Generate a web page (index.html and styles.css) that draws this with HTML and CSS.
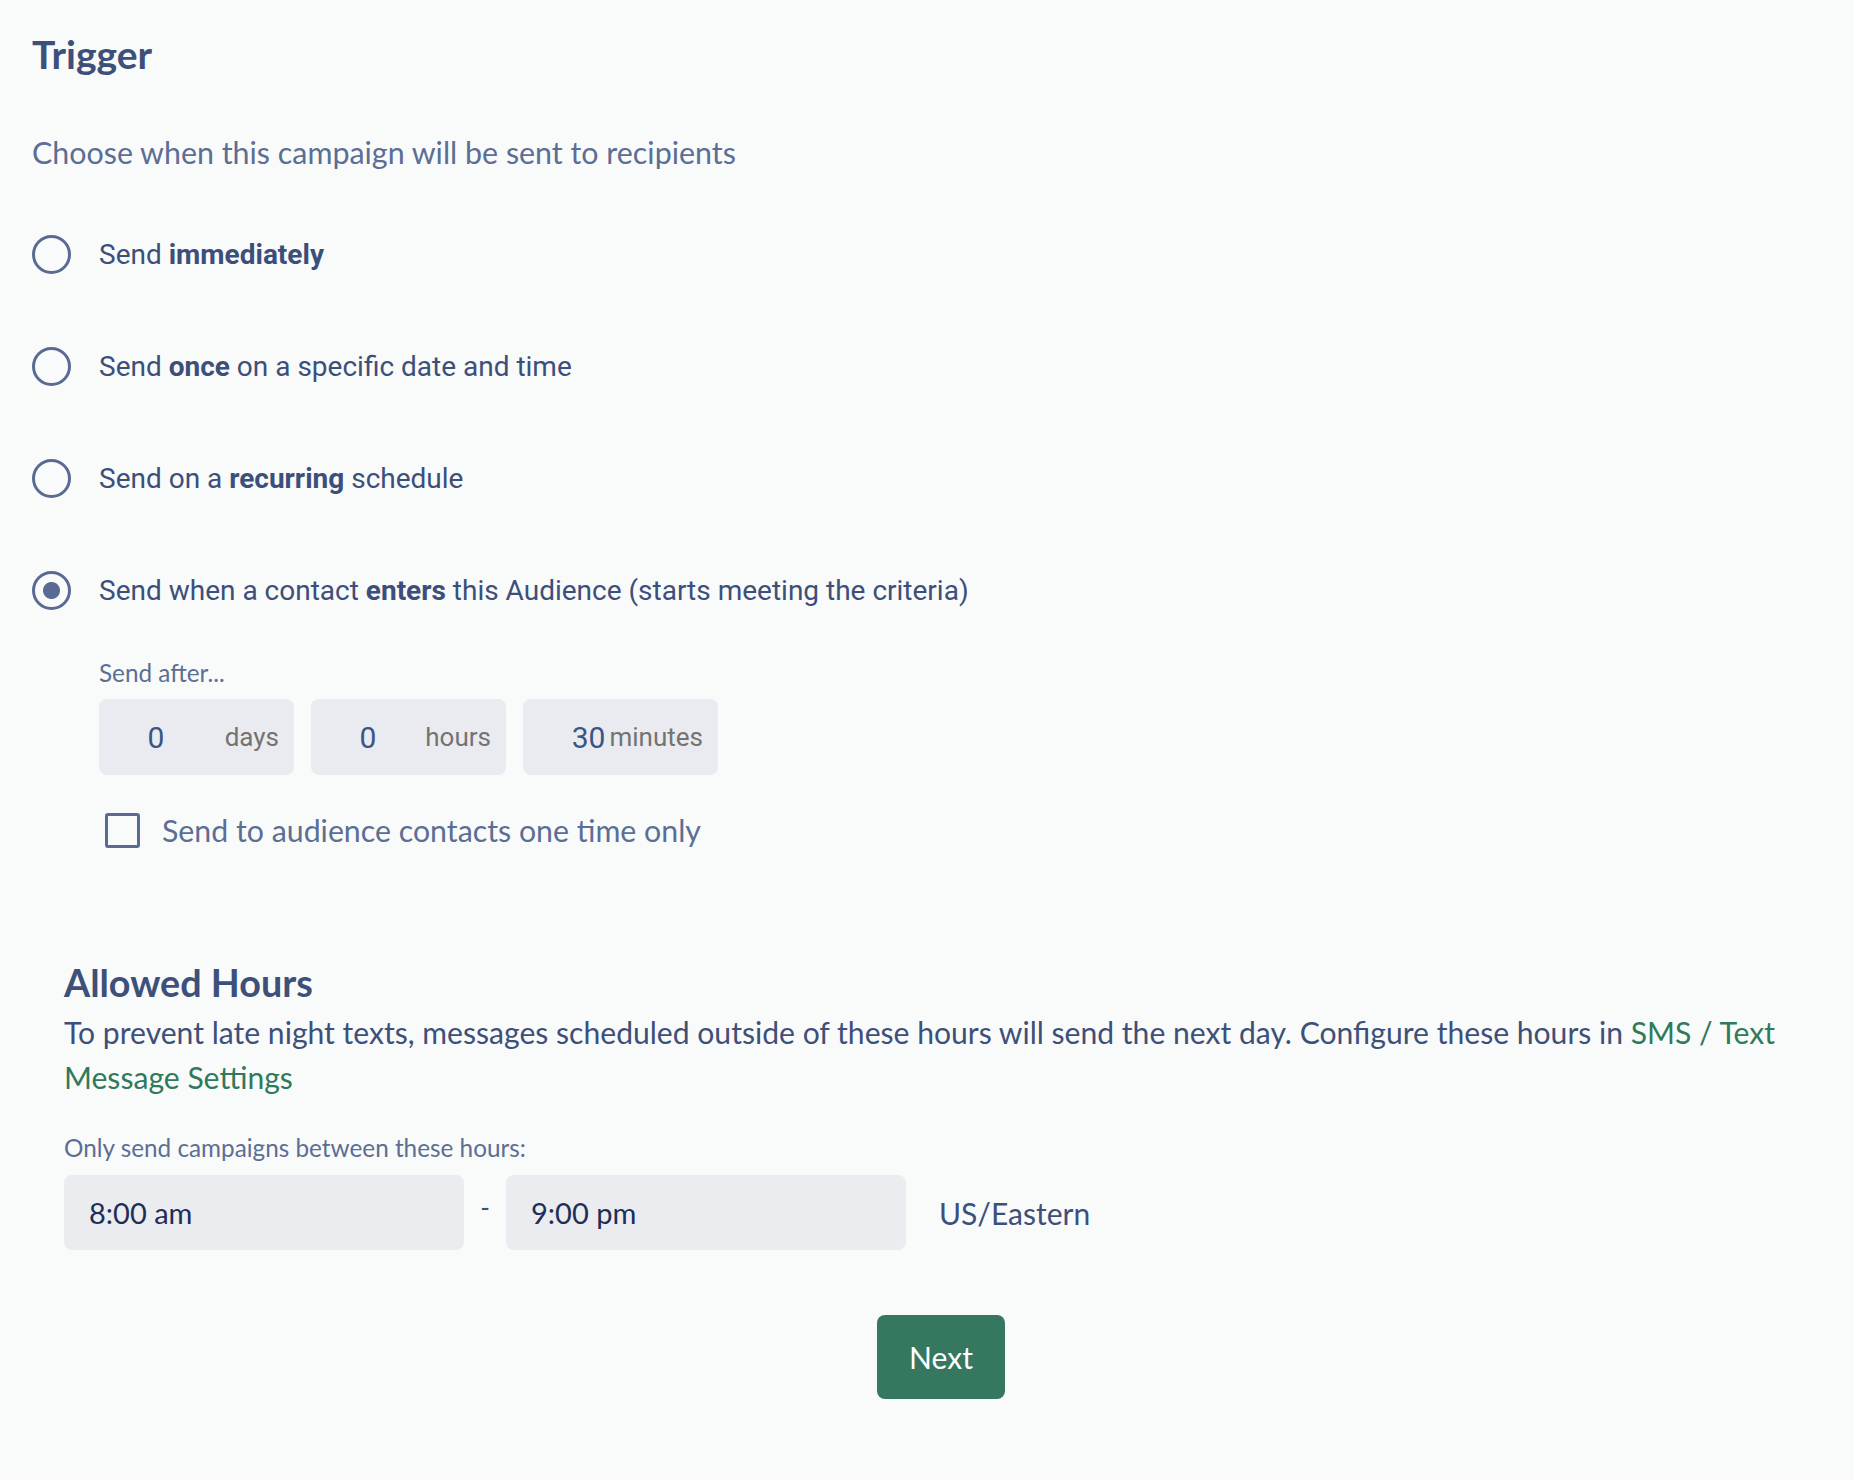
FILE: index.html
```html
<html>
    <head>
        <link rel="stylesheet" href="styles.css">
    </head>
    <body>
        <main class="trigger">
            <h2 class="title">Trigger</h2>
            <p class="lead">Choose when this campaign will be sent to recipients</p>

            <div class="options">
                <label class="option">
                    <input type="radio" name="when">
                    <span>Send <b>immediately</b></span>
                </label>
                <label class="option">
                    <input type="radio" name="when">
                    <span>Send <b>once</b> on a specific date and time</span>
                </label>
                <label class="option">
                    <input type="radio" name="when">
                    <span>Send on a <b>recurring</b> schedule</span>
                </label>
                <label class="option">
                    <input type="radio" name="when" checked>
                    <span>Send when a contact <b>enters</b> this Audience (starts meeting the criteria)</span>
                </label>
            </div>

            <div class="delay">
                <div class="small-label">Send after...</div>
                <div class="delay-inputs">
                    <div class="delay-box">
                        <input class="delay-num" value="0">
                        <span class="delay-unit">days</span>
                    </div>
                    <div class="delay-box">
                        <input class="delay-num" value="0">
                        <span class="delay-unit">hours</span>
                    </div>
                    <div class="delay-box wide-num">
                        <input class="delay-num" value="30">
                        <span class="delay-unit">minutes</span>
                    </div>
                </div>
                <label class="once">
                    <input type="checkbox">
                    <span>Send to audience contacts one time only</span>
                </label>
            </div>

            <section class="allowed">
                <h3 class="allowed-title">Allowed Hours</h3>
                <p class="allowed-text">
                    To prevent late night texts, messages scheduled outside of these hours will send the next day. Configure these hours in <a href="#">SMS / Text Message Settings</a>
                </p>
                <div class="small-label">Only send campaigns between these hours:</div>
                <div class="hours">
                    <input class="hour-input" value="8:00 am">
                    <span class="dash">-</span>
                    <input class="hour-input" value="9:00 pm">
                    <span class="tz">US/Eastern</span>
                </div>
                <div class="actions">
                    <button class="next">Next</button>
                </div>
            </section>
        </main>
    </body>
</html>
```

FILE: styles.css
```css
body {
    margin: 0;
    background: #f9fafa;
    font-family: "Lato", "Open Sans", sans-serif;
    color: #3d5079;
}
.trigger {
    padding: 32px 0 0 32px;
}
.title {
    margin: 0;
    font-size: 39px;
    line-height: 44px;
    font-weight: 700;
    color: #3d5079;
}
.lead {
    margin: 56px 0 0;
    font-size: 30.4px;
    line-height: 40px;
    color: #5b6e94;
}
.options {
    margin-top: 62px;
    display: flex;
    flex-direction: column;
    gap: 72px;
}
.option {
    display: flex;
    align-items: center;
    gap: 28px;
    height: 40px;
    font-family: "Roboto", sans-serif;
    font-size: 28px;
    color: #3c4f7a;
}
.option b {
    font-weight: 700;
}
.option input {
    appearance: none;
    -webkit-appearance: none;
    margin: 0;
    width: 39px;
    height: 39px;
    border: 3.5px solid #5a6b93;
    border-radius: 50%;
    box-sizing: border-box;
    background: transparent;
}
.option input:checked {
    background: radial-gradient(circle, #5a6b93 8px, transparent 9px);
}
.delay {
    padding-left: 67px;
    margin-top: 47px;
}
.small-label {
    font-size: 24.3px;
    line-height: 32px;
    color: #5b6e94;
}
.delay-inputs {
    display: flex;
    gap: 17px;
    margin-top: 10px;
}
.delay-box {
    display: flex;
    align-items: center;
    width: 195px;
    height: 76px;
    box-sizing: border-box;
    padding-right: 15px;
    background: #e9ebf0;
    border-radius: 8px;
}
.delay-num {
    width: 114px;
    border: 0;
    background: none;
    padding: 0;
    text-align: center;
    font-family: "Roboto", sans-serif;
    font-size: 30px;
    color: #3c5585;
    outline: none;
}
.wide-num .delay-num {
    width: auto;
    flex: 1;
    min-width: 0;
    padding-right: 4px;
    text-align: right;
}
.delay-unit {
    margin-left: auto;
    font-family: "Roboto", sans-serif;
    font-size: 26px;
    color: #737373;
}
.once {
    display: flex;
    align-items: center;
    gap: 22px;
    height: 40px;
    margin-top: 35px;
    padding-left: 6px;
    font-size: 30.3px;
    color: #5b6e94;
}
.once input {
    appearance: none;
    -webkit-appearance: none;
    margin: 0;
    width: 35px;
    height: 35px;
    border: 3.5px solid #5a6b93;
    border-radius: 3px;
    box-sizing: border-box;
    background: transparent;
}
.allowed {
    margin-top: 111px;
    padding: 0 36px 0 32px;
}
.allowed-title {
    margin: 0;
    font-size: 37.7px;
    line-height: 44px;
    font-weight: 700;
    color: #3d5079;
}
.allowed-text {
    margin: 5px 0 0;
    font-size: 30.1px;
    line-height: 45px;
    color: #3d5079;
}
.allowed-text a {
    color: #2f7a5a;
    text-decoration: none;
}
.allowed .small-label {
    margin-top: 32px;
}
.hours {
    display: flex;
    align-items: center;
    margin-top: 11px;
}
.hour-input {
    width: 400px;
    height: 75px;
    box-sizing: border-box;
    border: 0;
    border-radius: 8px;
    padding: 0 25px;
    background: #ebecf0;
    font-family: "Lato", sans-serif;
    font-size: 29px;
    color: #1e2e57;
    outline: none;
}
.dash {
    width: 42px;
    text-align: center;
    font-size: 26px;
    color: #3d5079;
    margin-top: -12px;
}
.tz {
    margin-left: 33px;
    font-size: 30px;
    color: #3d5079;
}
.actions {
    display: flex;
    justify-content: center;
    margin-top: 65px;
}
.next {
    width: 128px;
    height: 84px;
    border: 0;
    border-radius: 8px;
    background: #367760;
    color: #fff;
    font-family: "Lato", sans-serif;
    font-size: 30px;
}
```
